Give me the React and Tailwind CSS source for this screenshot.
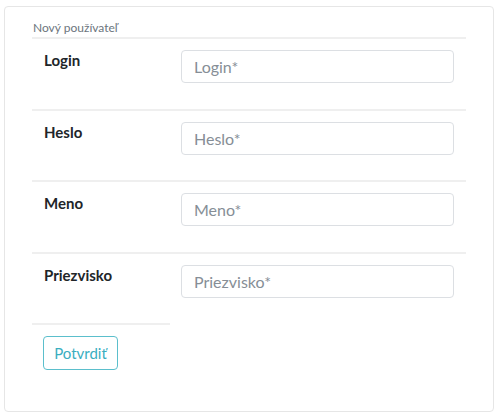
import React from 'react';

const fields = ['Login', 'Heslo', 'Meno', 'Priezvisko'];

const App = () => (
  <div className="w-[500px] h-[418px] bg-white pt-[6px] pl-[4px] font-['Lato',sans-serif]">
    <div className="w-[490px] h-[406px] border border-[#e6e6e6] rounded-[4px] px-[27px] pt-[13px]">
      <div className="text-[12px] leading-[16px] text-[#6c757d] pl-px">Nový používateľ</div>
      <div className="mt-[1px]">
        {fields.map((f) => (
          <div key={f} className="flex border-t-2 border-[#efefef] h-[71.5px] pt-[11px]">
            <div className="w-[149px] pl-[12px] text-[15px] leading-[20px] font-bold text-[#212529]">{f}</div>
            <input
              className="w-[273px] h-[33px] border border-[#dcdfe3] rounded-[4px] px-[12px] text-[16px] placeholder:text-[#868e96] outline-none"
              placeholder={f + '*'}
            />
          </div>
        ))}
        <div className="w-[138px] border-t-2 border-[#efefef]" />
        <button className="mt-[11px] ml-[11px] w-[75px] h-[34px] border border-[#5bbfcc] rounded-[4px] text-[15px] text-[#3aaebf] bg-white">
          Potvrdiť
        </button>
      </div>
    </div>
  </div>
);

export default App;
